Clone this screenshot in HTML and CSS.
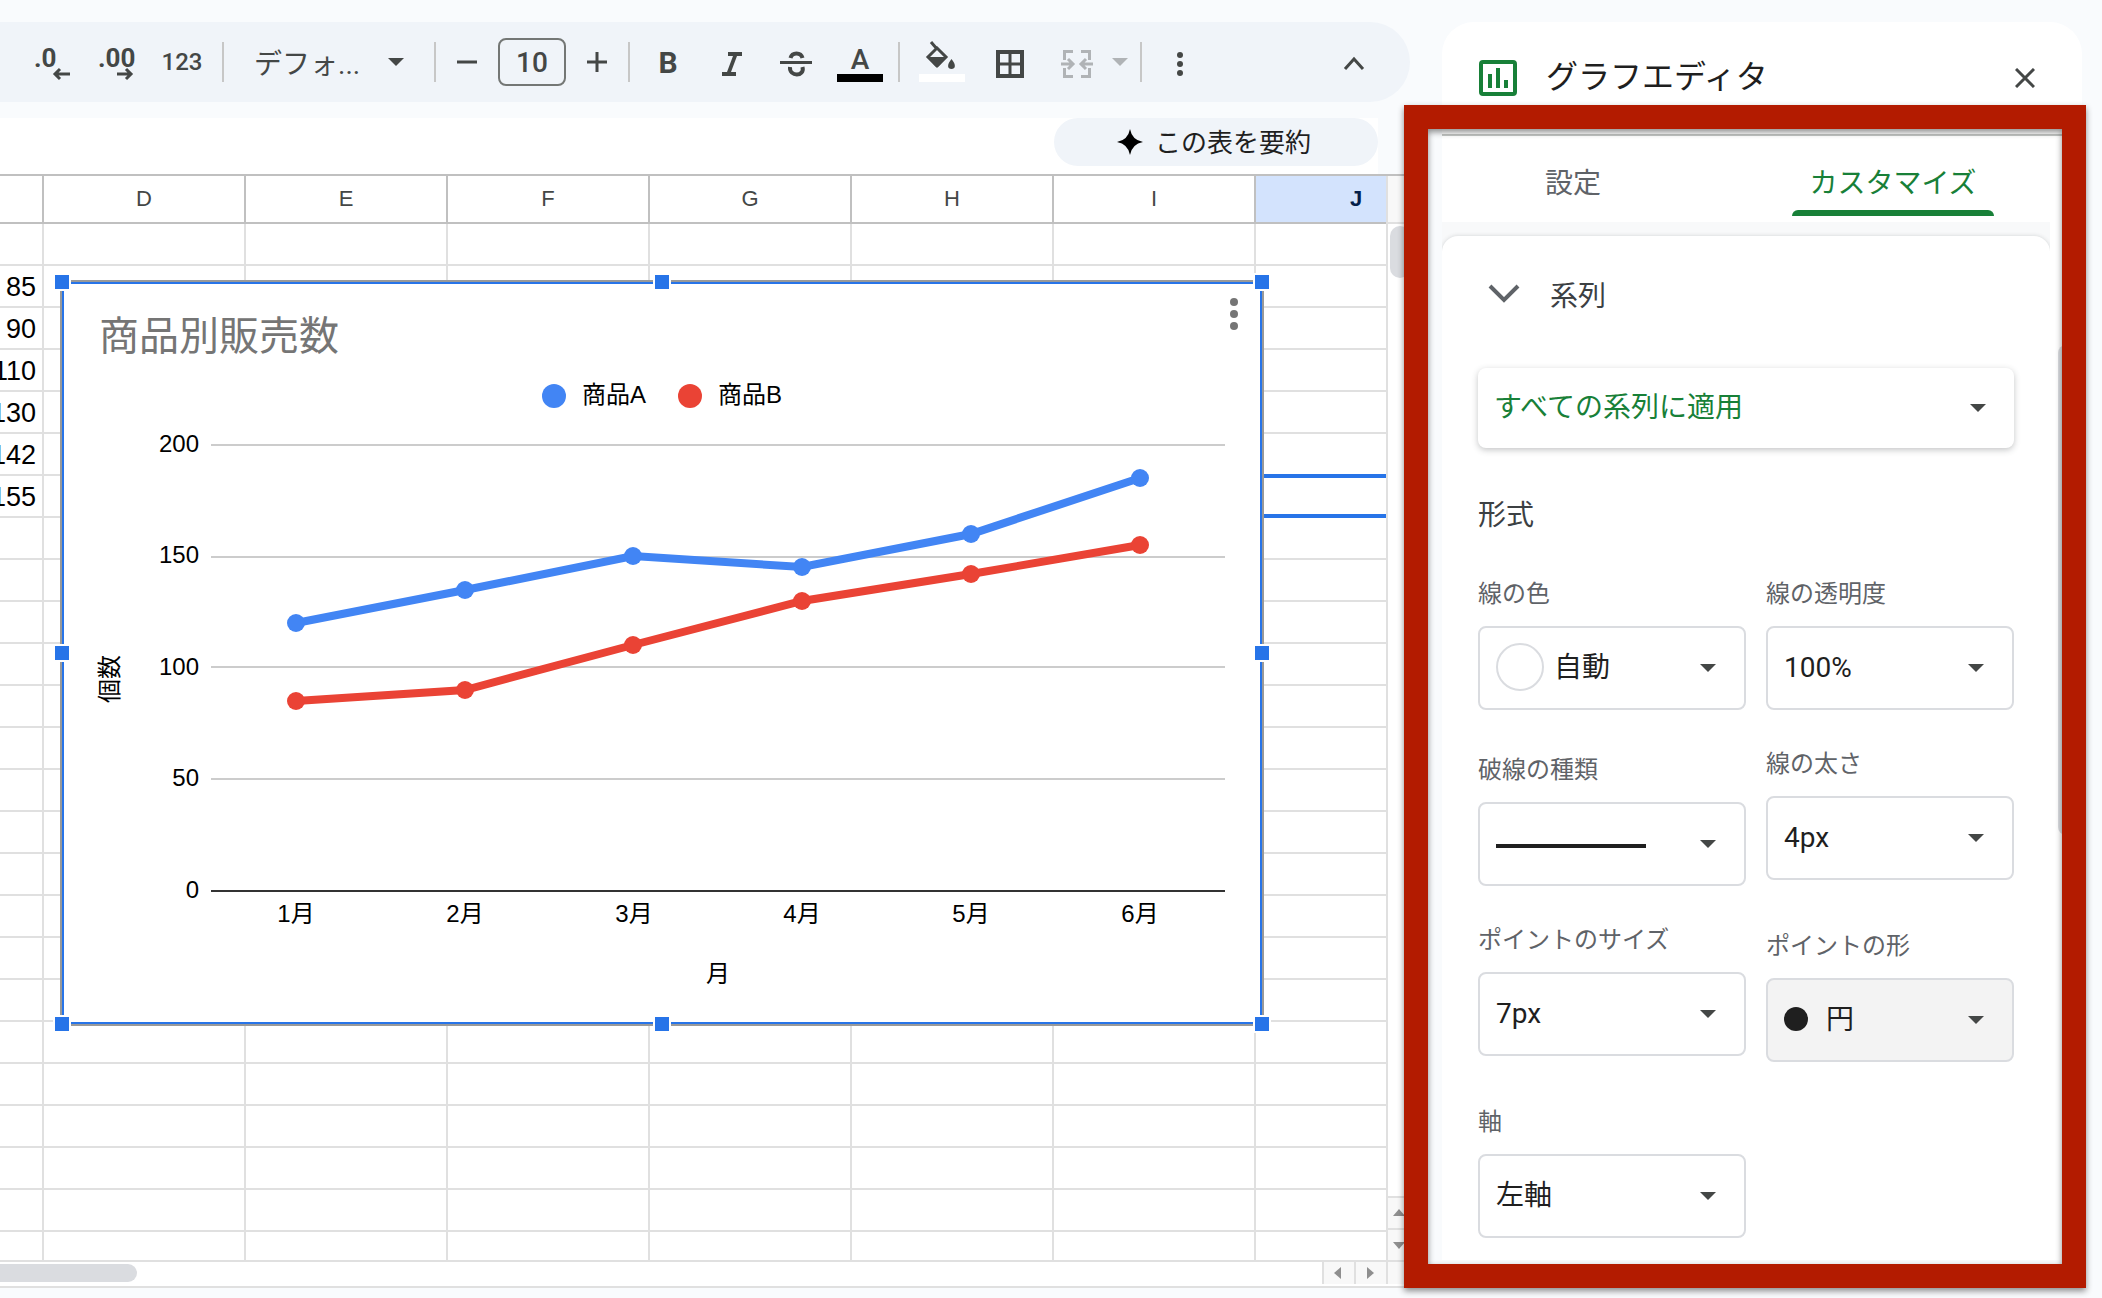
FILE: index.html
```html
<!DOCTYPE html>
<html lang="ja">
<head>
  <meta charset="UTF-8" />
  <title>グラフエディタ</title>
  <meta name="viewport" content="width=device-width, initial-scale=1.0">
  <link rel="stylesheet" href="styles.css">
</head>
<body>
  <main class="workspace">
    <div class="toolbar">
      <button class="tool" aria-label="小数点以下の桁数を減らす">
        <span class="decimal">.0</span>
        <svg class="decimal-arrow" viewBox="0 0 18 14"><path d="M18 7H3M8 2L3 7l5 5" /></svg>
      </button>
      <button class="tool" aria-label="小数点以下の桁数を増やす">
        <span class="decimal">.00</span>
        <svg class="decimal-arrow" viewBox="0 0 18 14"><path d="M1 7h14M10 2l5 5-5 5" /></svg>
      </button>
      <button class="tool tool-format">123</button>
      <span class="divider"></span>
      <button class="font-picker">デフォ...<span class="caret"></span></button>
      <span class="divider"></span>
      <button class="tool tool-step" aria-label="縮小"><svg viewBox="0 0 48 48"><path class="line thin" d="M14 24h20" /></svg></button>
      <input class="font-size" type="text" value="10" aria-label="フォントサイズ">
      <button class="tool tool-step" aria-label="拡大"><svg viewBox="0 0 48 48"><path class="line thin" d="M14 24h20M24 14v20" /></svg></button>
      <span class="divider"></span>
      <button class="tool tool-bold" aria-label="太字">B</button>
      <button class="tool" aria-label="斜体"><svg viewBox="0 0 48 48"><path d="M20 14h14v4h-5l-6 16h5v4H14v-4h5l6-16h-5z" /></svg></button>
      <button class="tool" aria-label="取り消し線"><svg viewBox="0 0 48 48"><path class="line thin" d="M8 24.5h32" /><path class="line" d="M18.500 20C20 14 29 14 30.500 20M18 29C17 39 33 39 30.500 29" /></svg></button>
      <button class="tool tool-color" aria-label="テキストの色">A<span class="color-bar black"></span></button>
      <span class="divider"></span>
      <button class="tool tool-fill" aria-label="塗りつぶしの色">
        <svg viewBox="0 0 48 48"><path class="line thin" d="M13 4l6 7M19 10l9 9-9 9-9-9z" /><path d="M9 19h20l-8 9q-2 2-4 0zM33.500 21c5 6 4 10 0 10s-5-4 0-10z" /></svg>
        <span class="color-bar white"></span>
      </button>
      <button class="tool" aria-label="枠線"><svg viewBox="0 0 48 48"><path class="line" d="M12 14h24v24H12z" /><path class="line thin" d="M24 14v24M12 26h24" /></svg></button>
      <button class="tool muted" aria-label="セルを結合"><svg viewBox="-3 0 48 48"><path class="line thin" d="M20 13.500h-8.500V22M28 13.500h8.500V22M20 38.500h-8.500V30M28 38.500h8.500V30M8 26h11M40 26H29M15 21l5 5-5 5M33 21l-5 5 5 5" /></svg></button>
      <button class="tool tool-caret muted" aria-label="結合の種類"><span class="caret"></span></button>
      <span class="divider"></span>
      <button class="tool" aria-label="その他"><svg viewBox="0 0 48 48"><circle cx="24" cy="17" r="3" /><circle cx="24" cy="26" r="3" /><circle cx="24" cy="35" r="3" /></svg></button>
      <button class="tool tool-collapse" aria-label="メニューを非表示"><svg viewBox="0 0 48 48"><path class="line thin" d="M15 31l9-10 9 10" /></svg></button>
    </div>

    <div class="formula-bar">
      <button class="summary">
        <svg viewBox="0 0 26 26"><path d="M13 0Q15 11 26 13Q15 15 13 26Q11 15 0 13Q11 11 13 0z" /></svg>
        <span>この表を要約</span>
      </button>
    </div>

    <div class="sheet">
      <div class="grid">
        <table>
          <thead>
            <tr><th></th><th>D</th><th>E</th><th>F</th><th>G</th><th>H</th><th>I</th><th class="active">J</th></tr>
          </thead>
          <tbody id="rows"></tbody>
        </table>

        <div class="chart">
          <svg viewBox="0 0 1200 742">
            <text class="chart-title" x="37" y="68">商品別販売数</text>
            <circle class="dot-a" cx="492" cy="114" r="12" />
            <text x="520" y="121">商品A</text>
            <circle class="dot-b" cx="628" cy="114" r="12" />
            <text x="656" y="121">商品B</text>

            <path class="gridline" d="M149 163h1014M149 275h1014M149 385h1014M149 497h1014" />
            <path class="baseline" d="M149 609h1014" />

            <g class="y-labels">
              <text x="137" y="170">200</text>
              <text x="137" y="281">150</text>
              <text x="137" y="393">100</text>
              <text x="137" y="504">50</text>
              <text x="137" y="616">0</text>
            </g>
            <g class="x-labels">
              <text x="234" y="640">1月</text>
              <text x="403" y="640">2月</text>
              <text x="572" y="640">3月</text>
              <text x="740" y="640">4月</text>
              <text x="909" y="640">5月</text>
              <text x="1078" y="640">6月</text>
              <text x="656" y="700">月</text>
              <text transform="translate(56 397) rotate(-90)">個数</text>
            </g>

            <polyline class="line-a" points="234,341 403,308 571,274 740,285 909,252 1078,196" />
            <g class="dot-a">
              <circle cx="234" cy="341" r="9" />
              <circle cx="403" cy="308" r="9" />
              <circle cx="571" cy="274" r="9" />
              <circle cx="740" cy="285" r="9" />
              <circle cx="909" cy="252" r="9" />
              <circle cx="1078" cy="196" r="9" />
            </g>
            <polyline class="line-b" points="234,419 403,408 571,363 740,319 909,292 1078,263" />
            <g class="dot-b">
              <circle cx="234" cy="419" r="9" />
              <circle cx="403" cy="408" r="9" />
              <circle cx="571" cy="363" r="9" />
              <circle cx="740" cy="319" r="9" />
              <circle cx="909" cy="292" r="9" />
              <circle cx="1078" cy="263" r="9" />
            </g>
            <g class="chart-menu">
              <circle cx="1172" cy="20" r="4" />
              <circle cx="1172" cy="32" r="4" />
              <circle cx="1172" cy="44" r="4" />
            </g>
          </svg>
          <span class="handle top left"></span>
          <span class="handle top center"></span>
          <span class="handle top right"></span>
          <span class="handle middle left"></span>
          <span class="handle middle right"></span>
          <span class="handle bottom left"></span>
          <span class="handle bottom center"></span>
          <span class="handle bottom right"></span>
        </div>
      </div>

      <div class="vscroll">
        <div class="vscroll-head"></div>
        <div class="vscroll-thumb"></div>
        <button class="scroll-btn" aria-label="上へ"><svg viewBox="0 0 12 10"><path d="M0 8h12L6 1z" /></svg></button>
        <button class="scroll-btn" aria-label="下へ"><svg viewBox="0 0 12 10"><path d="M0 2h12L6 9z" /></svg></button>
      </div>
    </div>

    <div class="hscroll">
      <div class="hscroll-thumb"></div>
      <button class="scroll-btn" aria-label="左へ"><svg viewBox="0 0 12 12"><path d="M9 0v12L2 6z" /></svg></button>
      <button class="scroll-btn" aria-label="右へ"><svg viewBox="0 0 12 12"><path d="M3 0v12l7-6z" /></svg></button>
      <div class="hscroll-corner"></div>
    </div>
  </main>

  <aside class="panel">
    <header class="panel-header">
      <svg class="panel-icon" viewBox="0 0 38 36"><rect x="2" y="2" width="34" height="32" rx="2" /><path d="M11 14v14M19 8v20M27 20v8" /></svg>
      <h1>グラフエディタ</h1>
      <button class="close" aria-label="閉じる"><svg viewBox="0 0 20 20"><path d="M1 1l18 18M19 1L1 19" /></svg></button>
    </header>

    <div class="tabs">
      <button class="tab">設定</button>
      <button class="tab active">カスタマイズ</button>
    </div>

    <div class="panel-body">
      <section class="card">
        <button class="section-toggle">
          <svg viewBox="0 0 32 20"><path d="M2 2l14 14L30 2" /></svg>
          系列
        </button>

        <div class="select apply">
          <select aria-label="系列"><option>すべての系列に適用</option></select>
        </div>

        <h2>形式</h2>

        <div class="fields">
          <div class="column">
            <div class="field">
              <label for="lineColor">線の色</label>
              <div class="select with-swatch">
                <span class="swatch"></span>
                <select id="lineColor"><option>自動</option></select>
              </div>
            </div>
            <div class="field space-m">
              <label for="dashType">破線の種類</label>
              <div class="select">
                <span class="dash"></span>
                <select id="dashType"><option value="solid"></option></select>
              </div>
            </div>
            <div class="field space-s">
              <label for="pointSize">ポイントのサイズ</label>
              <div class="select">
                <select id="pointSize"><option>7px</option></select>
              </div>
            </div>
            <div class="field space-l">
              <label for="axis">軸</label>
              <div class="select">
                <select id="axis"><option>左軸</option></select>
              </div>
            </div>
          </div>

          <div class="column">
            <div class="field">
              <label for="opacity">線の透明度</label>
              <div class="select">
                <select id="opacity"><option>100%</option></select>
              </div>
            </div>
            <div class="field space-s">
              <label for="thickness">線の太さ</label>
              <div class="select">
                <select id="thickness"><option>4px</option></select>
              </div>
            </div>
            <div class="field space-l">
              <label for="pointShape">ポイントの形</label>
              <div class="select with-shape">
                <span class="shape"></span>
                <select id="pointShape"><option>円</option></select>
              </div>
            </div>
          </div>
        </div>
      </section>
      <div class="panel-thumb"></div>
    </div>

    <div class="highlight"></div>
  </aside>

  <script>
    const values = { 2: 85, 3: 90, 4: 110, 5: 130, 6: 142, 7: 155 };
    const rows = document.getElementById("rows");

    // C列〜J列のセルを作成
    for (let r = 1; r <= 25; r++) {
      const tr = document.createElement("tr");
      for (let c = 0; c < 8; c++) {
        const td = document.createElement("td");
        if (c === 0 && values[r]) td.textContent = values[r];
        if (c === 7 && r === 7) td.className = "selected";
        tr.appendChild(td);
      }
      rows.appendChild(tr);
    }
  </script>
</body>
</html>
```
FILE: styles.css
```css
:root {
  --bg: #f9fbfd;
  --bar: #f0f4f9;
  --icon: #444746;
  --green: #188038;
  --blue: #2774e8;
  --grid: #e0e0e0;
  --grid-head: #c0c0c0;
  --border: #dadce0;
}

* {
  box-sizing: border-box;
}

body {
  display: flex;
  height: 100vh;
  margin: 0;
  overflow: hidden;
  background: var(--bg);
  color: #1f1f1f;
  font-family: Roboto, "Noto Sans CJK JP", sans-serif;
}

button, input, select {
  font-family: inherit;
  color: inherit;
  border: none;
  background: none;
  padding: 0;
  margin: 0;
}

svg {
  display: block;
}

.workspace {
  flex: 1;
  min-width: 0;
  display: flex;
  flex-direction: column;
  padding: 22px 32px 10px 0;
}

/* ツールバー */
.toolbar {
  display: flex;
  align-items: center;
  height: 80px;
  flex: none;
  margin-bottom: 16px;
  padding: 0 24px 0 20px;
  background: var(--bar);
  border-radius: 0 40px 40px 0;
  color: var(--icon);
}

.tool {
  position: relative;
  display: flex;
  align-items: center;
  justify-content: center;
  width: 64px;
  height: 48px;
  flex: none;
}

.tool svg {
  width: 48px;
  height: 48px;
  fill: currentColor;
}

.tool .line {
  fill: none;
  stroke: currentColor;
  stroke-width: 4;
}

.tool .thin {
  stroke-width: 3;
}

.tool .decimal {
  width: 36px;
  margin-bottom: 8px;
  font-size: 26px;
  font-weight: 700;
  text-align: left;
}

.tool .decimal-arrow {
  position: absolute;
  right: 14px;
  bottom: 5px;
  width: 18px;
  height: 14px;
  fill: none;
  stroke: currentColor;
  stroke-width: 3;
}

.tool-format {
  width: 68px;
  font-size: 24px;
  font-weight: 500;
}

.tool-step {
  width: 50px;
}

.tool-bold {
  font-size: 30px;
  font-weight: 700;
}

.tool-color {
  align-items: flex-start;
  font-size: 28px;
  font-weight: 500;
  line-height: 44px;
}

.tool-fill {
  width: 72px;
}

.tool-caret {
  width: 28px;
}

.tool-collapse {
  margin-left: auto;
}

.muted {
  color: #b0b3b6;
}

.color-bar {
  position: absolute;
  left: calc(50% - 23px);
  bottom: 4px;
  width: 46px;
  height: 8px;
}

.black {
  background: #000;
}

.white {
  background: #fff;
}

.divider {
  width: 2px;
  height: 40px;
  margin: 0 6px;
  flex: none;
  background: #c7c7c7;
}

.caret {
  border: 8px solid transparent;
  border-top-color: currentColor;
  border-bottom: none;
}

.font-picker {
  display: flex;
  align-items: center;
  justify-content: space-between;
  width: 198px;
  padding: 0 24px;
  font-size: 28px;
}

.font-size {
  width: 68px;
  height: 48px;
  margin: 0 6px;
  border: 2px solid #747775;
  border-radius: 8px;
  font-size: 28px;
  font-weight: 500;
  text-align: center;
}

.formula-bar {
  display: flex;
  justify-content: flex-end;
  height: 56px;
  flex: none;
  margin-right: 32px;
  background: #fff;
}

.summary {
  display: flex;
  align-items: center;
  justify-content: center;
  gap: 12px;
  width: 324px;
  height: 48px;
  padding-right: 4px;
  border-radius: 24px;
  background: var(--bar);
  font-size: 26px;
}

.summary span {
  padding-bottom: 4px;
}

.summary svg {
  width: 26px;
  height: 26px;
}

/* シート */
.sheet {
  display: flex;
  flex: 1;
  min-height: 0;
  border-top: 2px solid var(--grid-head);
  background: #fff;
}

.grid {
  position: relative;
  flex: 1;
  min-width: 0;
  overflow: hidden;
}

.grid table {
  width: 1616px;
  margin-left: -158px;
  table-layout: fixed;
  border-collapse: separate;
  border-spacing: 0;
}

.grid th {
  height: 48px;
  padding: 0;
  border-right: 2px solid var(--grid-head);
  border-bottom: 2px solid var(--grid-head);
  color: var(--icon);
  font-size: 22px;
  font-weight: 400;
  font-family: "Liberation Sans", sans-serif;
}

.grid th.active {
  background: #d3e3fd;
  color: #041e49;
  font-weight: 700;
}

.grid td {
  height: 42px;
  padding: 2px 6px 0 0;
  border-right: 2px solid var(--grid);
  border-bottom: 2px solid var(--grid);
  color: #000;
  font: 27px/38px "Liberation Sans", sans-serif;
  text-align: right;
}

.grid td.selected {
  border-top: 2px solid var(--blue);
  border-bottom: 4px solid var(--blue);
  box-shadow: 0 -2px 0 var(--blue);
}

.vscroll {
  display: flex;
  flex-direction: column;
  width: 24px;
  border-left: 2px solid var(--grid);
}

.vscroll-head {
  height: 48px;
  background: #f8f8f8;
  border-bottom: 2px solid var(--grid);
}

.vscroll-thumb {
  height: 52px;
  margin: 2px 0 auto 2px;
  border-radius: 10px;
  background: var(--border);
}

.scroll-btn {
  display: flex;
  align-items: center;
  justify-content: center;
  height: 32px;
  background: #f8f8f8;
  border-top: 2px solid var(--grid);
}

.scroll-btn svg {
  width: 12px;
  height: 12px;
  fill: #8f8f8f;
}

.hscroll {
  display: flex;
  align-items: flex-start;
  height: 28px;
  flex: none;
  background: #fff;
  border-top: 2px solid var(--grid);
  border-bottom: 2px solid var(--grid);
}

.hscroll-thumb {
  width: 137px;
  height: 18px;
  margin: 2px auto 0 0;
  border-radius: 0 9px 9px 0;
  background: var(--border);
}

.hscroll .scroll-btn {
  width: 32px;
  height: 22px;
  padding-right: 2px;
  border-top: none;
  border-left: 2px solid var(--grid);
}

.hscroll-corner {
  width: 24px;
  height: 22px;
  background: #f8f8f8;
  border-left: 2px solid var(--grid);
}

/* グラフ */
.chart {
  position: absolute;
  left: 60px;
  top: 104px;
  width: 1204px;
  height: 746px;
  border: 2px solid #999;
  background: #fff;
  box-shadow: inset 0 0 0 2px var(--blue);
}

.chart svg {
  width: 100%;
  height: 100%;
  font-family: "Liberation Sans", "Noto Sans CJK JP", sans-serif;
  font-size: 24px;
}

.chart-title {
  font-size: 40px;
  fill: #757575;
}

.gridline {
  stroke: #ccc;
  stroke-width: 2;
}

.baseline {
  stroke: #333;
  stroke-width: 2;
}

.y-labels {
  text-anchor: end;
}

.x-labels {
  text-anchor: middle;
}

.line-a, .line-b {
  fill: none;
  stroke-width: 8;
}

.line-a {
  stroke: #4285f4;
}

.line-b {
  stroke: #ea4335;
}

.dot-a {
  fill: #4285f4;
}

.dot-b {
  fill: #ea4335;
}

.chart-menu {
  fill: #757575;
}

.handle {
  position: absolute;
  width: 14px;
  height: 14px;
  margin: -7px;
  background: var(--blue);
  box-shadow: 0 0 0 2px #fff;
}

.top { top: 0; }
.middle { top: 50%; }
.bottom { top: 100%; }
.left { left: 0; }
.center { left: 50%; }
.right { left: 100%; }

/* グラフエディタ */
.panel {
  position: relative;
  display: flex;
  flex-direction: column;
  width: 640px;
  flex: none;
  margin: 22px 20px 38px 0;
  border-radius: 32px 32px 0 0;
  background: #fff;
}

.panel-header {
  display: flex;
  align-items: center;
  height: 114px;
  flex: none;
  padding: 0 47px 0 37px;
  border-bottom: 2px solid #c4c7c5;
}

.panel-icon {
  width: 38px;
  height: 36px;
  fill: none;
  stroke: var(--green);
  stroke-width: 4;
}

.panel-header h1 {
  margin: 0 auto 0 29px;
  padding-bottom: 2px;
  font-size: 32px;
  font-weight: 400;
  line-height: 48px;
}

.close svg {
  width: 20px;
  height: 20px;
  stroke: var(--icon);
  stroke-width: 3;
}

.tabs {
  display: grid;
  grid-template-columns: 262px 1fr;
  height: 86px;
  flex: none;
}

.tab {
  position: relative;
  padding-top: 4px;
  color: #5f6368;
  font-size: 28px;
}

.tab.active {
  color: var(--green);
}

.tab.active::after {
  content: "";
  position: absolute;
  left: calc(50% - 101px);
  bottom: 6px;
  width: 202px;
  height: 6px;
  border-radius: 6px 6px 0 0;
  background: var(--green);
}

.panel-body {
  display: flex;
  flex: 1;
  min-height: 0;
  overflow: hidden;
}

.card {
  flex: 1;
  margin-top: 14px;
  padding: 34px 36px 0;
  border-radius: 16px 16px 0 0;
  background: #fff;
  box-shadow: 0 0 4px rgba(60, 64, 67, 0.2), 0 -14px 0 14px #f8f9fa;
  clip-path: inset(-14px 0 0 0);
}

.panel-thumb {
  width: 16px;
  height: 490px;
  margin: 123px 8px 0;
  border-radius: 8px;
  background: var(--border);
}

.section-toggle {
  display: flex;
  align-items: center;
  gap: 30px;
  height: 48px;
  padding-left: 10px;
  color: #3c4043;
  font-size: 28px;
}

.section-toggle svg {
  width: 32px;
  height: 20px;
  fill: none;
  stroke: #5f6368;
  stroke-width: 4;
}

.select {
  position: relative;
}

.select select {
  display: block;
  width: 100%;
  height: 84px;
  padding: 0 48px 2px 16px;
  appearance: none;
  border: 2px solid var(--border);
  border-radius: 8px;
  background: #fff;
  font-size: 28px;
}

.select::after {
  content: "";
  position: absolute;
  right: 30px;
  top: calc(50% - 4px);
  border: 8px solid transparent;
  border-top-color: var(--icon);
  border-bottom: none;
  pointer-events: none;
}

.apply {
  margin: 50px 0 48px;
}

.apply::after {
  right: 28px;
}

.apply select {
  height: 80px;
  border: none;
  color: var(--green);
  box-shadow: 0 2px 6px rgba(60, 64, 67, 0.3);
}

.card h2 {
  margin: 0 0 42px;
  color: #3c4043;
  font-size: 28px;
  font-weight: 400;
  line-height: 40px;
}

.fields {
  display: grid;
  grid-template-columns: 268fr 248fr;
  gap: 20px;
}

.field label {
  display: block;
  margin-bottom: 16px;
  color: #5f6368;
  font-size: 24px;
  line-height: 32px;
}

.space-s { margin-top: 38px; }
.space-m { margin-top: 44px; }
.space-l { margin-top: 50px; }

.swatch, .shape, .dash {
  position: absolute;
  pointer-events: none;
}

.swatch {
  left: 18px;
  top: 17px;
  width: 48px;
  height: 48px;
  border: 2px solid var(--border);
  border-radius: 50%;
}

.with-swatch select {
  padding-left: 74px;
}

.dash {
  left: 18px;
  top: 42px;
  width: 150px;
  height: 4px;
  background: #1f1f1f;
}

.shape {
  left: 18px;
  top: 29px;
  width: 24px;
  height: 24px;
  border-radius: 50%;
  background: #1f1f1f;
}

.with-shape select {
  padding-left: 58px;
  background: #f3f3f3;
}

/* 強調用の赤枠 */
.highlight {
  position: absolute;
  top: 83px;
  left: -38px;
  right: -4px;
  bottom: -28px;
  border: 24px solid #b31b00;
  filter: drop-shadow(0 3px 3px rgba(0, 0, 0, 0.45));
  pointer-events: none;
}
```
